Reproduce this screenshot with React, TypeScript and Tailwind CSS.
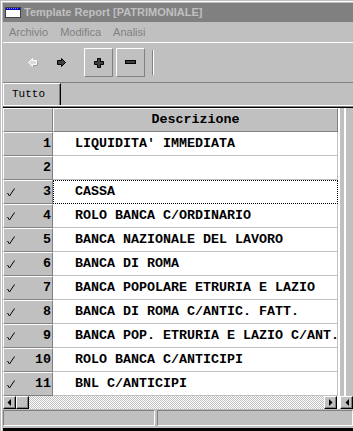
import React from "react";

const rows: { n: number; text: string; check: boolean }[] = [
  { n: 1, text: "LIQUIDITA' IMMEDIATA", check: false },
  { n: 2, text: "", check: false },
  { n: 3, text: "CASSA", check: true },
  { n: 4, text: "ROLO BANCA C/ORDINARIO", check: true },
  { n: 5, text: "BANCA NAZIONALE DEL LAVORO", check: true },
  { n: 6, text: "BANCA DI ROMA", check: true },
  { n: 7, text: "BANCA POPOLARE ETRURIA E LAZIO", check: true },
  { n: 8, text: "BANCA DI ROMA C/ANTIC. FATT.", check: true },
  { n: 9, text: "BANCA POP. ETRURIA E LAZIO C/ANT.", check: true },
  { n: 10, text: "ROLO BANCA C/ANTICIPI", check: true },
  { n: 11, text: "BNL C/ANTICIPI", check: true },
];

const raised =
  "border border-t-white border-l-white border-b-[#808080] border-r-[#808080] bg-[#c0c0c0]";
const sbtn =
  "border border-t-white border-l-white border-b-black border-r-black shadow-[inset_-1px_-1px_0_#808080] bg-[#c0c0c0] flex items-center justify-center";

function Check() {
  return (
    <svg width="8" height="9" viewBox="0 0 8 9">
      <polyline points="0.5,5 2.5,8 7.5,0.5" fill="none" stroke="black" strokeWidth="1" />
    </svg>
  );
}

function TriLeft() {
  return (
    <svg width="4" height="7" viewBox="0 0 4 7">
      <polygon points="4,0 4,7 0.5,3.5" fill="black" />
    </svg>
  );
}
function TriRight() {
  return (
    <svg width="4" height="7" viewBox="0 0 4 7">
      <polygon points="0,0 0,7 3.5,3.5" fill="black" />
    </svg>
  );
}

export default function App() {
  return (
    <div className="w-[353px] h-[431px] bg-[#c0c0c0] overflow-hidden pt-px pl-px">
      <div className="h-[430px] border-t border-l border-white flex flex-col pt-px pl-px font-['Liberation_Sans',Arial,sans-serif]">
        {/* Title bar */}
        <div className="h-[19px] bg-[#808080] flex items-center shrink-0">
          <svg className="ml-[2px]" width="16" height="11" viewBox="0 0 16 11">
            <rect x="0.5" y="0.5" width="15" height="10" fill="white" stroke="#404040" />
            <rect x="1" y="1" width="14" height="2" fill="#0000c0" />
            <line x1="2" y1="1.5" x2="14" y2="1.5" stroke="#8080ff" strokeDasharray="1 1" />
          </svg>
          <span className="ml-[3px] text-[11px] font-bold text-[#c0c0c0] leading-none whitespace-nowrap">
            Template Report [PATRIMONIALE]
          </span>
        </div>
        {/* Menu bar */}
        <div className="h-[20px] flex items-center pl-[6px] gap-[12px] text-[11px] text-[#808080] shrink-0 leading-none">
          <span>Archivio</span>
          <span>Modifica</span>
          <span>Analisi</span>
        </div>
        {/* Toolbar */}
        <div className="h-[41px] border-t border-b border-t-white border-b-[#808080] flex items-start pt-[5px] shrink-0">
          <div className="ml-[15px] w-[29px] h-[29px] flex items-center justify-center">
            <svg width="11" height="10" viewBox="0 0 11 10">
              <polygon points="10.5,3.5 6.5,3.5 6.5,1.5 2.5,5.5 6.5,9.5 6.5,7.5 10.5,7.5" fill="#808080" />
              <polygon points="9.5,2.5 5.5,2.5 5.5,0.5 1.5,4.5 5.5,8.5 5.5,6.5 9.5,6.5" fill="#dcdcdc" stroke="white" />
            </svg>
          </div>
          <div className="w-[29px] h-[29px] flex items-center justify-center">
            <svg width="10" height="10" viewBox="0 0 10 10">
              <polygon points="0.5,2.5 4.5,2.5 4.5,0.5 8.5,4.5 4.5,8.5 4.5,6.5 0.5,6.5" fill="#404040" stroke="black" />
            </svg>
          </div>
          <div className={`ml-[8px] w-[29px] h-[29px] ${raised} flex items-center justify-center`}>
            <svg width="10" height="10" viewBox="0 0 10 10">
              <polygon
                points="3.5,0.5 6.5,0.5 6.5,3.5 9.5,3.5 9.5,6.5 6.5,6.5 6.5,9.5 3.5,9.5 3.5,6.5 0.5,6.5 0.5,3.5 3.5,3.5"
                fill="#404040"
                stroke="black"
              />
            </svg>
          </div>
          <div className={`ml-[3px] w-[29px] h-[29px] ${raised} flex items-center justify-center`}>
            <svg width="11" height="5" viewBox="0 0 11 5">
              <rect x="0.5" y="0.5" width="10" height="3" fill="#404040" stroke="black" />
            </svg>
          </div>
          <div className="ml-[7px] mt-[2px] w-[2px] h-[25px] border-l border-r border-l-[#808080] border-r-white" />
        </div>
        {/* Tabs */}
        <div className="h-[22px] flex shrink-0">
          <div className="w-[58px] h-[22px] border-t border-l border-r border-t-white border-l-white border-r-black shadow-[inset_-1px_0_0_#808080] flex items-center pl-[8px] font-['Liberation_Mono',monospace] text-[11px] text-black leading-none">
            Tutto
          </div>
        </div>
        <div className="h-px bg-white shrink-0" />
        <div className="h-px bg-[#808080] shrink-0" />
        <div className="h-px bg-black shrink-0" />
        {/* Table area */}
        <div className="h-[288px] flex shrink-0 font-['Liberation_Mono','Courier_New',monospace] text-[13.33px] font-bold text-black leading-none">
          <div className="w-[335px] flex flex-col">
            <div className="h-[24px] flex">
              <div className={`w-[50px] h-[24px] ${raised}`} />
              <div className={`w-[285px] h-[24px] ${raised} flex items-center justify-center`}>
                Descrizione
              </div>
            </div>
            {rows.map((r) => (
              <div key={r.n} className="h-[24px] flex">
                <div className={`w-[50px] h-[24px] ${raised} flex items-center pl-[3px] pr-[1px]`}>
                  <div className="w-[8px] flex items-center">{r.check ? <Check /> : null}</div>
                  <div className="flex-1 text-right">{r.n}</div>
                </div>
                <div
                  className={
                    r.n === 3
                      ? "w-[285px] h-[24px] bg-white border border-dotted border-black flex items-center pl-[21px] whitespace-nowrap"
                      : "w-[285px] h-[24px] bg-white border-b border-r border-[#c0c0c0] flex items-center pl-[22px] whitespace-nowrap"
                  }
                >
                  {r.text}
                </div>
              </div>
            ))}
          </div>
          <div className="flex-1 flex">
            <div className="w-[2px] bg-white" />
            <div className="w-[4px] bg-[#c0c0c0]" />
            <div className="w-[2px] bg-white" />
            <div className="flex-1 bg-[#c0c0c0]" />
          </div>
        </div>
        {/* Horizontal scrollbar */}
        <div className="h-[13px] flex shrink-0">
          <div className={`w-[13px] h-[13px] ${sbtn}`}>
            <TriLeft />
          </div>
          <div className={`w-[13px] h-[13px] ${sbtn}`} />
          <div className="w-[296px] h-[13px] bg-[image:repeating-conic-gradient(#c0c0c0_0%_25%,#ffffff_0%_50%)] bg-[length:2px_2px]" />
          <div className={`w-[13px] h-[13px] ${sbtn}`}>
            <TriRight />
          </div>
          <div className="w-[3px] bg-white" />
          <div className={`w-[13px] h-[13px] ${sbtn}`}>
            <TriLeft />
          </div>
        </div>
        {/* Status bar */}
        <div className="h-[18px] flex gap-[2px] py-px shrink-0">
          <div className="w-[152px] h-[16px] border border-t-[#808080] border-l-[#808080] border-b-white border-r-white" />
          <div className="flex-1 h-[16px] border border-t-[#808080] border-l-[#808080] border-b-white border-r-white" />
        </div>
        <div className="h-px bg-[#c0c0c0] shrink-0" />
        <div className="h-[3px] bg-black shrink-0" />
      </div>
    </div>
  );
}
